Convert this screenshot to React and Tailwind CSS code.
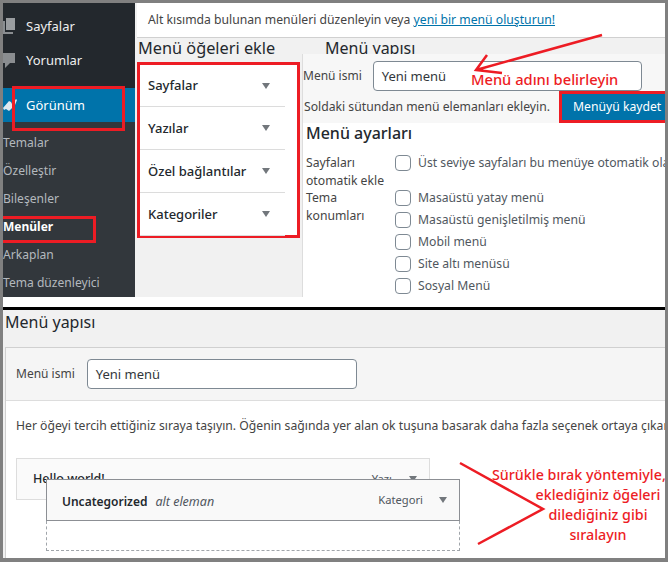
import React from 'react';

const font = { fontFamily: '"Noto Sans", "Open Sans", sans-serif' };

const Caret = ({ className = '' }) => (
    <svg width="8" height="6" viewBox="0 0 8 6" className={className}>
        <path d="M0 0h8L4 6z" fill="#72777c" />
    </svg>
);

const Check = () => (
    <span className="w-4 h-4 shrink-0 rounded-[4px] border border-[#7e8993] bg-white" />
);

const AddRow = ({ label, first }) => (
    <div className={`${first ? 'h-[42px]' : 'h-[43px]'} w-[145px] flex items-center justify-between pl-[8px] pr-[15px] border-b border-[#dcdcdc] text-[13px] font-medium text-[#23282d]`}>
        <span>{label}</span>
        <Caret />
    </div>
);

const SubItem = ({ label, active }) => (
    <div className={`h-[28px] flex items-center ${active ? 'text-[12px] font-bold text-white' : 'text-[12.1px] text-[#b4b9be]'}`}>
        {label}
    </div>
);

const App = () => {
    return (
        <div className="w-[668px] h-[562px] bg-[#808080] pt-[3px] pl-[3px] pr-[3px] pb-1 relative overflow-hidden leading-none" style={font}>
            <div className="w-full h-full bg-white flex flex-col overflow-hidden relative">
                {/* Top shot */}
                <div className="h-[294px] flex shrink-0">
                    <aside className="w-[132px] shrink-0 flex flex-col bg-[#32373c]">
                        <div className="h-[85px] bg-[#23282d] pt-[13px] text-[13px] text-[#eeeeee]">
                            <div className="h-[20px] flex items-center gap-[11px]">
                                <svg width="12" height="16" viewBox="0 0 12 16" className="shrink-0">
                                    <path d="M3 0h9v12H3z" fill="#9a9da0" />
                                    <path d="M0 3h2v11h8v2H0z" fill="#8a8d90" />
                                </svg>
                                <span>Sayfalar</span>
                            </div>
                            <div className="h-[20px] mt-[14px] flex items-center gap-[11px]">
                                <svg width="12" height="15" viewBox="0 0 12 15" className="shrink-0">
                                    <path d="M0 0h12v10H7l-5 5v-5H0z" fill="#8a8d90" />
                                </svg>
                                <span>Yorumlar</span>
                            </div>
                        </div>
                        <div className="h-[34px] bg-[#0073aa] relative flex items-center gap-[9px] text-[13px] text-white">
                            <svg width="14" height="14" viewBox="0 0 14 14" className="shrink-0">
                                <path d="M0 10 6 3l2 1 1 2 4-5 1 1-2 5-6 6-3-2-2 1z" fill="#dfeaf0" />
                            </svg>
                            <span>Görünüm</span>
                            <span className="absolute left-[9px] top-[-2px] w-[113px] h-[45px] border-[3px] border-[#ed1c24]" />
                        </div>
                        <div className="pt-[7px] flex flex-col relative">
                            <SubItem label="Temalar" />
                            <SubItem label="Özelleştir" />
                            <SubItem label="Bileşenler" />
                            <SubItem label="Menüler" active />
                            <SubItem label="Arkaplan" />
                            <SubItem label="Tema düzenleyici" />
                            <span className="absolute left-0 top-[94px] w-[93px] h-[27px] border-[3px] border-l-0 border-[#ed1c24]" />
                        </div>
                    </aside>

                    <main className="flex-1 bg-[#f1f1f1] flex flex-col min-w-0">
                        <div className="h-[35px] ml-[2px] shrink-0 bg-white border-b border-[#d0d0d0] flex items-center pl-[11px] text-[12.2px] text-[#444444] whitespace-nowrap">
                            Alt kısımda bulunan menüleri düzenleyin veya&nbsp;
                            <span className="text-[#0073aa] underline">yeni bir menü oluşturun!</span>
                        </div>
                        <div className="flex flex-1 min-h-0">
                            <div className="w-[167px] shrink-0 pl-[2px]">
                                <h2 className="h-[24px] pl-[1px] pb-[4px] flex items-center text-[16.3px] text-[#23282d] whitespace-nowrap">Menü öğeleri ekle</h2>
                                <div className="w-[163px] h-[176px] border-[3px] border-[#ed1c24] bg-white">
                                    <AddRow label="Sayfalar" first />
                                    <AddRow label="Yazılar" />
                                    <AddRow label="Özel bağlantılar" />
                                    <AddRow label="Kategoriler" />
                                </div>
                            </div>
                            <div className="flex-1 min-w-0 flex flex-col">
                                <h2 className="h-[16px] pl-[23px] text-[16px] text-[#23282d] whitespace-nowrap overflow-hidden leading-[20px]">Menü yapısı</h2>
                                <div className="h-[69px] shrink-0 bg-[#f7f7f7] border-l border-[#dddddd] flex flex-col text-[12.2px] text-[#444444]">
                                    <div className="h-[37px] flex items-center gap-[11px] pt-[7px] shrink-0">
                                        <span className="whitespace-nowrap text-[12px]">Menü ismi</span>
                                        <div className="w-[269px] h-[30px] rounded-[4px] border border-[#7e8993] bg-white flex items-center pl-[8px] text-[13px] text-[#32373c]">Yeni menü</div>
                                    </div>
                                    <div className="flex items-center justify-between h-[32px] whitespace-nowrap">
                                        <span className="pl-[1px]">Soldaki sütundan menü elemanları ekleyin.</span>
                                        <span className="w-[106px] h-[32px] shrink-0 bg-[#0073aa] border-[3px] border-r-0 border-[#ed1c24] flex items-center pl-[11px] text-white text-[12.2px]">Menüyü kaydet</span>
                                    </div>
                                </div>
                                <div className="flex-1 bg-white border-l border-[#dddddd] pl-[3px] text-[12.2px] text-[#444444] overflow-hidden">
                                    <h3 className="h-[19px] flex items-center text-[16px] font-medium text-[#23282d]">Menü ayarları</h3>
                                    <div className="flex mt-[13px]">
                                        <div className="w-[89px] shrink-0 leading-[17.6px] -mt-[1px]">
                                            <div>Sayfaları</div>
                                            <div>otomatik ekle</div>
                                            <div>Tema</div>
                                            <div>konumları</div>
                                        </div>
                                        <div className="flex flex-col whitespace-nowrap">
                                            <label className="h-[32px] flex items-start gap-[7px] text-[#50575e]"><Check /><span className="mt-[2px]">Üst seviye sayfaları bu menüye otomatik ola</span></label>
                                            {['Masaüstü yatay menü', 'Masaüstü genişletilmiş menü', 'Mobil menü', 'Site altı menüsü', 'Sosyal Menü'].map((item) => (
                                                <label key={item} className="h-[22px] flex items-center gap-[7px] text-[#50575e]"><Check /><span>{item}</span></label>
                                            ))}
                                        </div>
                                    </div>
                                </div>
                            </div>
                        </div>
                    </main>
                </div>

                <div className="h-[10px] shrink-0 bg-white" />
                <div className="h-[3px] shrink-0 bg-black" />

                {/* Bottom shot */}
                <div className="flex-1 bg-[#f1f1f1] flex flex-col min-h-0">
                    <h2 className="h-[37px] pl-[2px] pb-[13px] flex items-center text-[16px] text-[#23282d] shrink-0">Menü yapısı</h2>
                    <div className="flex-1 ml-[2px] bg-white border-t border-l border-[#d0d0d0] flex flex-col min-h-0">
                        <div className="h-[53px] shrink-0 bg-[#f5f5f5] border-b border-[#dddddd] flex items-center pl-[10px] gap-[12px] text-[12px] text-[#444444]">
                            <span>Menü ismi</span>
                            <div className="w-[270px] h-[30px] rounded-[4px] border border-[#7e8993] bg-white flex items-center pl-[8px] text-[13px] text-[#32373c]">Yeni menü</div>
                        </div>
                        <p className="h-[57px] shrink-0 pl-[10px] pt-[19px] text-[12.2px] text-[#444444] whitespace-nowrap overflow-hidden">
                            Her öğeyi tercih ettiğiniz sıraya taşıyın. Öğenin sağında yer alan ok tuşuna basarak daha fazla seçenek ortaya çıkar
                        </p>
                        <div className="relative flex-1">
                            <div className="ml-[10px] w-[414px] h-[42px] bg-[#fafafa] border border-[#dddddd] flex items-center justify-between pl-[16px] pr-[12px] text-[12.5px] font-medium text-[#23282d]">
                                <span>Hello world!</span>
                                <span className="flex items-center gap-[17px] font-normal text-[11.2px] text-[#50575e]">Yazı <Caret /></span>
                            </div>
                            <div className="absolute left-[40px] top-[21px] w-[414px] h-[42px] bg-[#f9f9f9] border border-[#8c8f94] flex items-center justify-between pl-[15px] pr-[12px]">
                                <span>
                                    <span className="text-[12px] font-semibold text-[#23282d]">Uncategorized</span>
                                    <span className="ml-[8px] text-[12.5px] italic text-[#50575e]">alt eleman</span>
                                </span>
                                <span className="flex items-center gap-[16px] text-[11.2px] text-[#50575e]">Kategori <Caret /></span>
                            </div>
                            <div className="absolute left-[40px] top-[63px] w-[414px] h-[30px] border border-t-0 border-dashed border-[#a0a5aa]" />
                        </div>
                    </div>
                </div>

                {/* Annotations */}
                <span className="absolute left-[468px] top-[69px] text-[14.7px] font-medium text-[#ed1c24] whitespace-nowrap">Menü adını belirleyin</span>
                <div className="absolute left-[500px] top-[462px] w-[190px] text-center text-[14.3px] leading-[20px] font-medium text-[#ed1c24] whitespace-nowrap">
                    <div className="text-left -ml-[11px]">Sürükle bırak yöntemiyle,</div>
                    <div>eklediğiniz öğeleri</div>
                    <div>dilediğiniz gibi</div>
                    <div>sıralayın</div>
                </div>
                <svg className="absolute left-[-3px] top-[-3px] pointer-events-none" width="668" height="562" viewBox="0 0 668 562" fill="none" stroke="#ed1c24" strokeWidth="2.5">
                    <path d="M602 35 476 70M487 55l-11 15 26 3" />
                    <path d="M460 463l83 46-65 35" />
                </svg>
            </div>
        </div>
    );
};

export default App;
